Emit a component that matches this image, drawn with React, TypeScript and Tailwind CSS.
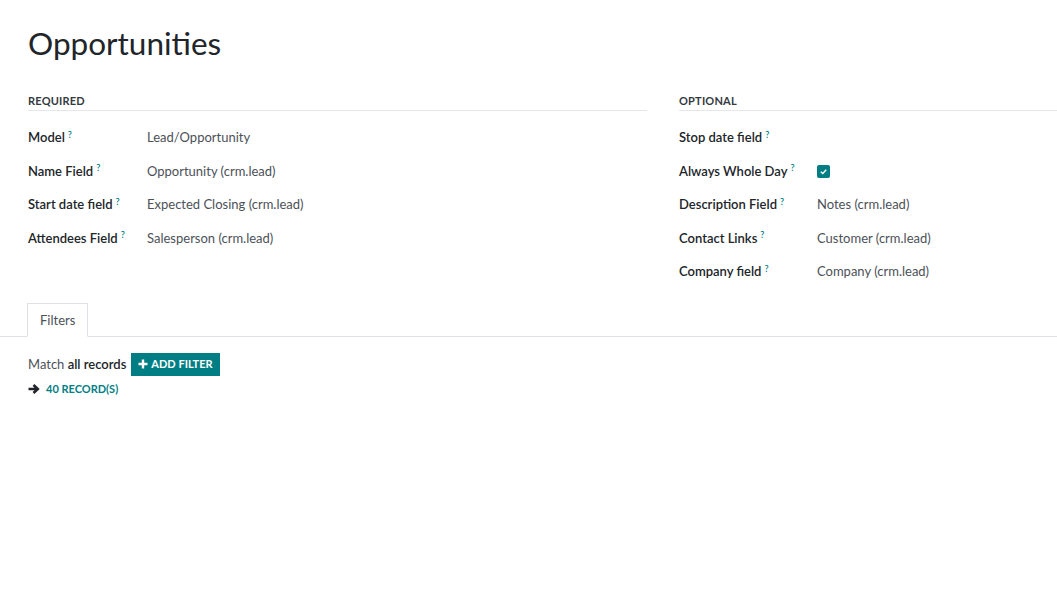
import { useState } from "react";

type Field = { label: string; value?: string; checkbox?: boolean };

const required: Field[] = [
  { label: "Model", value: "Lead/Opportunity" },
  { label: "Name Field", value: "Opportunity (crm.lead)" },
  { label: "Start date field", value: "Expected Closing (crm.lead)" },
  { label: "Attendees Field", value: "Salesperson (crm.lead)" },
];

const optional: Field[] = [
  { label: "Stop date field" },
  { label: "Always Whole Day", checkbox: true },
  { label: "Description Field", value: "Notes (crm.lead)" },
  { label: "Contact Links", value: "Customer (crm.lead)" },
  { label: "Company field", value: "Company (crm.lead)" },
];

function FieldRow({ f, labelW }: { f: Field; labelW: string }) {
  const [checked, setChecked] = useState(true);
  return (
    <div className="flex items-start h-[33.5px]">
      <div className={`${labelW} shrink-0 font-semibold text-[#212529]`}>
        {f.label}
        <sup className="ml-[3px] text-[9px] text-[#017e84] font-semibold">?</sup>
      </div>
      {f.checkbox ? (
        <button
          onClick={() => setChecked(!checked)}
          className={`mt-[4px] w-[13px] h-[13px] rounded-[2px] flex items-center justify-center ${checked ? "bg-[#017e84]" : "border border-gray-400"}`}
        >
          {checked && (
            <svg width="9" height="9" viewBox="0 0 10 10">
              <path d="M2 5.2 L4.2 7.2 L8 3" fill="none" stroke="white" strokeWidth="1.6" />
            </svg>
          )}
        </button>
      ) : (
        <div className="text-[#4c5157]">{f.value}</div>
      )}
    </div>
  );
}

function Section({ title, fields, labelW, className }: { title: string; fields: Field[]; labelW: string; className: string }) {
  return (
    <div className={className}>
      <div className="text-[11px] font-bold text-[#343a40] tracking-[0.2px] pb-[1px] border-b border-[#e5e7eb] leading-[16px]">
        {title}
      </div>
      <div className="pt-[16px]">
        {fields.map((f) => (
          <FieldRow key={f.label} f={f} labelW={labelW} />
        ))}
      </div>
    </div>
  );
}

export default function App() {
  return (
    <div className="min-h-screen bg-white text-[13px] leading-[20px] text-[#212529]" style={{ fontFamily: "Lato, 'Open Sans', sans-serif" }}>
      <div className="px-[28px] pt-[24px]">
        <h1 className="text-[31.5px] leading-[38px] font-normal text-[#212529]">Opportunities</h1>
      </div>
      <div className="flex pl-[28px] pt-[31px]">
        <Section title="REQUIRED" fields={required} labelW="w-[119px]" className="w-[619px]" />
        <Section title="OPTIONAL" fields={optional} labelW="w-[138px]" className="ml-[32px] flex-1" />
      </div>
      <div className="mt-[8px] border-b border-[#dee2e6] flex pl-[27px]">
        <div className="-mb-px px-[12px] h-[34px] flex items-center border border-[#dee2e6] border-b-white bg-white text-[#4c5157]">
          Filters
        </div>
      </div>
      <div className="px-[28px] pt-[16px]">
        <div className="flex items-center">
          <span className="text-[#4c5157]">
            Match <span className="font-semibold text-[#212529]">all records</span>
          </span>
          <button className="ml-[5px] h-[23px] px-[7px] bg-[#017e84] text-white text-[11px] font-bold flex items-center gap-[3px]">
            <svg width="10" height="10" viewBox="0 0 10 10">
              <path d="M5 0.5 V9.5 M0.5 5 H9.5" stroke="white" strokeWidth="2.4" />
            </svg>
            ADD FILTER
          </button>
        </div>
        <div className="flex items-center mt-[3px] text-[11px] font-bold text-[#017e84]">
          <svg width="12" height="12" viewBox="0 0 12 12" className="mr-[6px]">
            <path d="M0.5 6 H9 M5.5 2 L9.8 6 L5.5 10" fill="none" stroke="#212529" strokeWidth="2.6" />
          </svg>
          40 RECORD(S)
        </div>
      </div>
    </div>
  );
}
